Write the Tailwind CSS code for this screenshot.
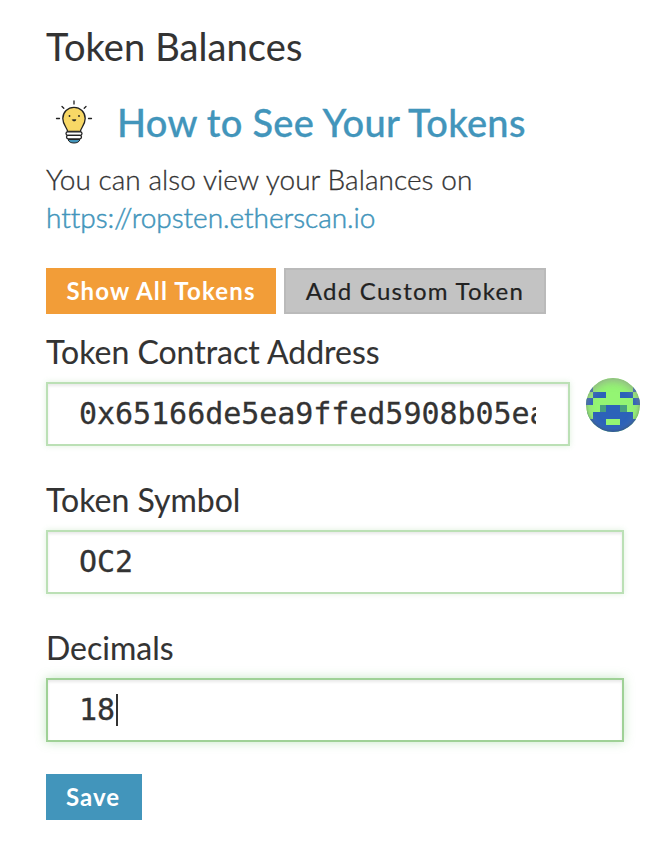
<!DOCTYPE html>
<html lang="en">

<head>
  <meta charset="UTF-8">
  <meta name="viewport" content="width=device-width, initial-scale=1.0">
  <title>Token Balances</title>
  <script src="https://cdn.jsdelivr.net/npm/@tailwindcss/browser@4"></script>
</head>

<body class="bg-white text-[#333333] font-['Lato',sans-serif]">
  <main class="w-[672px] h-[848px] pl-[46px] pr-8 pt-[23px] overflow-hidden">

    <!-- Balances heading -->
    <h5 class="h-[46px] leading-[46px] text-[38px] tracking-[0.1px] whitespace-nowrap [-webkit-text-stroke:0.1px]">Token Balances</h5>

    <div class="mt-[30px] h-[46px] flex items-center">
      <svg class="w-14 h-14 shrink-0" viewBox="0 -1 56 56" fill="none">
        <g stroke="#222" stroke-width="1.3" stroke-linecap="round">
          <path d="M28 6v3M16 11.500l1.800 1.800M40 11.500l-1.800 1.800M10.500 23.500h3M42.500 23.500h3" />
        </g>
        <path d="M21.500 36.500c0-3.500-4.700-6.500-4.700-13a11.200 11.200 0 0 1 22.400 0c0 6.500-4.700 9.500-4.700 13z" fill="#f8d866" stroke="#222" stroke-width="1.300" />
        <path d="M22 44.500h12c-.8 2.500-3 3.500-6 3.500s-5.200-1-6-3.500z" fill="#4295bb" stroke="#222" stroke-width="1" />
        <rect x="20" y="36.800" width="16" height="3.500" rx="1.700" fill="#fff" stroke="#222" stroke-width="1.300" />
        <rect x="20.500" y="40.300" width="15" height="3.500" rx="1.700" fill="#fff" stroke="#222" stroke-width="1.300" />
        <circle cx="23.500" cy="21" r=".9" fill="#222" />
        <circle cx="33" cy="21" r=".9" fill="#222" />
        <path d="M26.300 24.800c.5 1.500 3.200 1.500 3.700 0z" fill="#222" stroke="#222" stroke-width=".8" />
      </svg>
      <a href="#" class="ml-[15px] text-[38px] leading-[46px] tracking-[0.28px] font-medium text-[#4295bb] whitespace-nowrap [-webkit-text-stroke:0.3px]">How to See Your Tokens</a>
    </div>

    <p class="mt-[15px] text-[28px] leading-[38px] font-light tracking-[0.05px] whitespace-nowrap [-webkit-text-stroke:0.3px]">
      You can also view your Balances on<br>
      <a href="#" class="text-[#4295bb] tracking-[-0.05px] [-webkit-text-stroke:0.5px]">https://ropsten.etherscan.io</a>
    </p>

    <!-- Token actions -->
    <div class="mt-8 flex gap-2 h-[46px]">
      <button class="w-[230px] bg-[#f29d38] text-white text-[24px] font-bold tracking-[1.15px] whitespace-nowrap">Show All Tokens</button>
      <button class="w-[262px] bg-[#c3c3c3] border-2 border-[#bababa] text-[#222222] text-[24px] tracking-[1.25px] whitespace-nowrap [-webkit-text-stroke:0.2px]">Add Custom Token</button>
    </div>

    <!-- Custom token form -->
    <form>
      <label for="address" class="block mt-[18px] h-10 leading-10 text-[32px] whitespace-nowrap [-webkit-text-stroke:0.1px]">Token Contract Address</label>
      <div class="mt-[10px] flex items-start gap-4">
        <input id="address" type="text" value="0x65166de5ea9ffed5908b05ea" class="w-[524px] h-16 pl-[31px] pr-8 pb-[2px] border-2 border-[#bbe0b5] shadow-[inset_0_2px_3px_rgba(0,0,0,0.09),0_0_6px_rgba(93,186,90,0.2)] text-[30px] tracking-[-0.04px] font-['DejaVu_Sans_Mono',monospace] [-webkit-text-stroke:0.3px]">
        <!-- Address identicon -->
        <div class="w-[54px] h-[54px] -mt-1 rounded-full overflow-hidden relative">
          <svg class="block w-full h-full" viewBox="0 0 8 8" shape-rendering="crispEdges">
            <rect width="8" height="8" fill="#94f573" />
            <path d="M1 2h2v1H1zM5 2h2v1H5zM0 1h1v1H0zM7 1h1v1H7zM0 3h1v1H0zM7 3h1v1H7zM3 4h2v1h2v1h1v2H0V5h3z" fill="#2c62b9" />
            <path d="M0 5h1v-1H0zM0 4h1v1H0zM0 5h1v1H0zM7 5h1v1H7z" fill="#94f573" />
            <path d="M2 4h1v1H2zM5 4h1v1H5z" fill="#48a080" />
            <path d="M3 6h2v1H3z" fill="#94f573" />
          </svg>
          <div class="absolute inset-0 rounded-full shadow-[inset_0_3px_8px_rgba(150,150,150,0.7),inset_0_-1px_3px_rgba(0,0,0,0.3)]"></div>
        </div>
      </div>

      <label for="symbol" class="block mt-[34px] h-10 leading-10 text-[32px] whitespace-nowrap [-webkit-text-stroke:0.1px]">Token Symbol</label>
      <input id="symbol" type="text" value="OC2" class="block mt-[10px] w-[578px] h-16 pl-[31px] pr-8 pb-[2px] border-2 border-[#bbe0b5] shadow-[inset_0_2px_3px_rgba(0,0,0,0.09),0_0_6px_rgba(93,186,90,0.2)] text-[30px] tracking-[-0.04px] font-['DejaVu_Sans_Mono',monospace] [-webkit-text-stroke:0.3px]">

      <label class="block mt-[34px] h-10 leading-10 text-[32px] whitespace-nowrap [-webkit-text-stroke:0.1px]">Decimals</label>
      <div class="mt-[10px] w-[578px] h-16 pl-[31px] pr-8 flex items-center border-2 border-[#9fd196] shadow-[inset_0_2px_3px_rgba(0,0,0,0.09),0_0_10px_rgba(93,186,90,0.35)] text-[30px] font-['DejaVu_Sans_Mono',monospace]">
        <span class="pb-[2px] pr-px tracking-[-0.04px] [-webkit-text-stroke:0.3px]">18</span><span class="w-[2px] h-8 bg-[#333333]"></span>
      </div>

      <button type="button" class="block mt-8 w-24 h-[46px] pr-[2px] bg-[#4295bb] text-white text-[24px] font-bold tracking-[1px]">Save</button>
    </form>

  </main>
</body>

</html>
